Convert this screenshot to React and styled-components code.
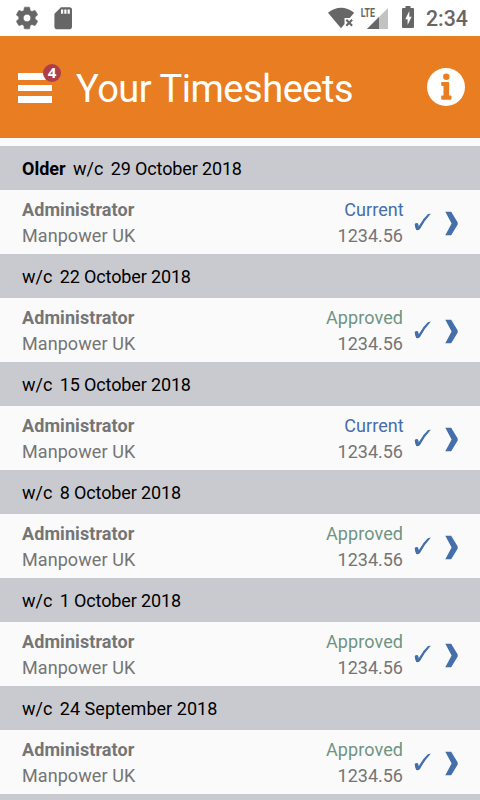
import React from "react";
import styled, { createGlobalStyle } from "styled-components";

const GlobalStyle = createGlobalStyle`
  *, *::before, *::after { box-sizing: border-box; }
  body {
    margin: 0;
    background: #fafafa;
    font-family: Roboto, "Liberation Sans", sans-serif;
  }
`;

const Screen = styled.div`
  display: flex;
  flex-direction: column;
  width: 480px;
  height: 800px;
  overflow: hidden;
  background: #fafafa;
`;

const StatusBar = styled.div`
  display: flex;
  flex: none;
  align-items: center;
  justify-content: space-between;
  height: 36px;
  padding: 0 12px 0 14px;
  background: #fff;
  color: #666;
`;

const StatusGroup = styled.div`
  display: flex;
  align-items: center;
  gap: ${(p) => p.$gap};
`;

const StatusIcon = styled.svg`
  display: block;
  fill: currentColor;
`;

const Network = styled.text`
  font: 700 13.5px Roboto, sans-serif;
`;

const Clock = styled.span`
  width: 42px;
  margin-left: 10px;
  padding-top: 2px;
  font-size: 21.3px;
  font-weight: 500;
  line-height: 34px;
  white-space: nowrap;
`;

const Header = styled.header`
  display: flex;
  flex: none;
  align-items: center;
  height: 102px;
  margin-bottom: 8px;
  padding: 0 15px 0 18px;
  background: #e87d22;
  color: #fff;
`;

const MenuButton = styled.button`
  position: relative;
  display: flex;
  flex-direction: column;
  gap: 5px;
  width: 34px;
  padding: 2px 0 0;
  border: 0;
  background: none;
`;

const MenuBar = styled.span`
  height: 6.6px;
  background: #fff;
`;

const Badge = styled.span`
  position: absolute;
  top: -7px;
  right: -9px;
  width: 18px;
  height: 18px;
  border-radius: 50%;
  background: #ae3e4b;
  color: #fff;
  font: 700 15px/17px "Open Sans", sans-serif;
  text-align: center;
`;

const Title = styled.h1`
  flex: 1;
  margin: 4px 0 0 24px;
  font-size: 38px;
  font-weight: 400;
  letter-spacing: -0.46px;
  line-height: 50px;
  white-space: nowrap;
`;

const InfoButton = styled.button`
  padding: 0;
  border: 0;
  background: none;
`;

const WeekHeading = styled.h2`
  display: flex;
  flex: none;
  align-items: center;
  gap: 7.4px;
  height: 44px;
  margin: 0;
  padding: 0 22px;
  background: #c9cacf;
  color: #000;
  font-size: 18px;
  font-weight: 400;
`;

const WeekDate = styled.span`
  letter-spacing: ${(p) => (p.$tight ? "-0.14px" : "0.04px")};
`;

const Row = styled.div`
  display: flex;
  flex: none;
  align-items: center;
  height: 64px;
  padding: 1px 21px 0 22px;
  color: #757575;
  font-size: 18px;
  line-height: 26px;
`;

const Details = styled.div`
  flex: 1;
  letter-spacing: 0.08px;
`;

const Figures = styled.div`
  margin-right: 10px;
  text-align: right;
`;

const Status = styled.div`
  margin-right: ${(p) => (p.$approved ? "0" : "-0.8px")};
  letter-spacing: 0.08px;
  color: ${(p) => (p.$approved ? "#6f9482" : "#446fa9")};
`;

const RowIcon = styled.svg`
  display: block;
  flex: none;
  margin-bottom: 1px;
  fill: #446fa9;
`;

const weeks = [
  { date: "29 October 2018", status: "Current", older: true },
  { date: "22 October 2018", status: "Approved" },
  { date: "15 October 2018", status: "Current" },
  { date: "8 October 2018", status: "Approved" },
  { date: "1 October 2018", status: "Approved" },
  { date: "24 September 2018", status: "Approved" },
];

function Week({ date, status, older }) {
  return (
    <>
      <WeekHeading>
        {older && <b>Older</b>}
        <span>w/c</span>
        <WeekDate $tight={date.includes("October")}>{date}</WeekDate>
      </WeekHeading>
      <Row>
        <Details>
          <b>Administrator</b>
          <div>Manpower UK</div>
        </Details>
        <Figures>
          <Status $approved={status === "Approved"}>{status}</Status>
          <div>1234.56</div>
        </Figures>
        <RowIcon width="46" height="28" viewBox="413 208 46 28">
          <path d="M414.700 224q1.200-1.300 2.600-1 1.200.4 1.500 3.200Q423 218.500 427.800 214.200q1.700-.7 3-.4Q424.500 220.500 420 229q-1.600 1.500-3.800 1.100-1.300-2.300-1.500-6.100z" />
          <path d="M445.300 211.800h5.900l6.500 10.700v2l-6.500 10.700h-5.900l6.300-11.700z" />
        </RowIcon>
      </Row>
    </>
  );
}

export default function App() {
  return (
    <Screen>
      <GlobalStyle />
      <StatusBar>
        <StatusGroup $gap="10px">
          <StatusIcon width="26" height="26" viewBox="0 0 24 24">
            <path stroke="currentColor" strokeWidth=".6" d="M19.430 12.980c.04-.32.07-.64.07-.98s-.03-.66-.07-.98l2.110-1.650c.19-.15.24-.42.12-.64l-2-3.460c-.12-.22-.39-.3-.61-.22l-2.490 1c-.52-.4-1.080-.73-1.690-.98l-.38-2.650C14.460 2.180 14.250 2 14 2h-4c-.25 0-.46.18-.49.42l-.38 2.650c-.61.25-1.170.59-1.690.98l-2.490-1c-.23-.09-.49 0-.61.22l-2 3.460c-.13.22-.07.49.12.64l2.110 1.650c-.04.32-.07.65-.07.98s.03.66.07.98l-2.110 1.650c-.19.15-.24.42-.12.64l2 3.460c.12.22.39.3.61.22l2.490-1c.52.4 1.080.73 1.690.98l.38 2.650c.03.24.24.42.49.42h4c.25 0 .46-.18.49-.42l.38-2.650c.61-.25 1.170-.59 1.690-.98l2.490 1c.23.09.49 0 .61-.22l2-3.460c.12-.22.07-.49-.12-.64l-2.110-1.650zM12 15.500c-1.930 0-3.500-1.570-3.500-3.500s1.570-3.500 3.500-3.500 3.500 1.570 3.500 3.500-1.570 3.500-3.500 3.500z" />
          </StatusIcon>
          <StatusIcon width="26.400" height="26.400" viewBox="0 0 24 24">
            <path d="M18 2h-8L4.020 8 4 20c0 1.100.9 2 2 2h12c1.100 0 2-.9 2-2V4c0-1.100-.9-2-2-2zm-6 6h-2V4h2v4zm3 0h-2V4h2v4zm3 0h-2V4h2v4z" />
          </StatusIcon>
        </StatusGroup>
        <StatusGroup $gap="0">
          <StatusIcon width="90" height="36" viewBox="326 0 90 36">
            <path d="M328 12.700Q341 2.700 354.200 12.700L349.700 18H344.500v6L341 28.200z" />
            <path d="M346.300 19.800l5.800 5.900m0-5.900l-5.800 5.900" stroke="currentColor" strokeWidth="2.100" />
            <Network x="360.800" y="17.300" textLength="14.200" lengthAdjust="spacingAndGlyphs">LTE</Network>
            <path d="M388 8v21h-21z" opacity=".4" />
            <path d="M379 17v12h-12z" />
            <path fillRule="evenodd" d="M403 8h2.500V6h5v2h2.500q1 0 1 1v18q0 1-1 1h-10q-1 0-1-1V9q0-1 1-1zM409.300 11l-4 8.200h2.300v5.800l4-8.200h-2.300z" />
          </StatusIcon>
          <Clock>2:34</Clock>
        </StatusGroup>
      </StatusBar>
      <Header>
        <MenuButton aria-label="Menu">
          <MenuBar />
          <MenuBar />
          <MenuBar />
          <Badge>4</Badge>
        </MenuButton>
        <Title>Your Timesheets</Title>
        <InfoButton aria-label="Information">
          <svg width="38" height="38" viewBox="427 68 38 38" display="block">
            <circle cx="446" cy="87" r="19" fill="#fff" />
            <g fill="#e87d22">
              <circle cx="446.300" cy="76.700" r="3.200" />
              <path d="M442.200 82h6q1 0 1 1v12.500h1.300q1 0 1 1v2.200q0 1-1 1h-8.300q-1 0-1-1v-2.200q0-1 1-1h1.300v-9.500h-1.300q-1 0-1-1V83q0-1 1-1z" />
            </g>
          </svg>
        </InfoButton>
      </Header>
      {weeks.map((week) => (
        <Week key={week.date} {...week} />
      ))}
      <WeekHeading />
    </Screen>
  );
}
